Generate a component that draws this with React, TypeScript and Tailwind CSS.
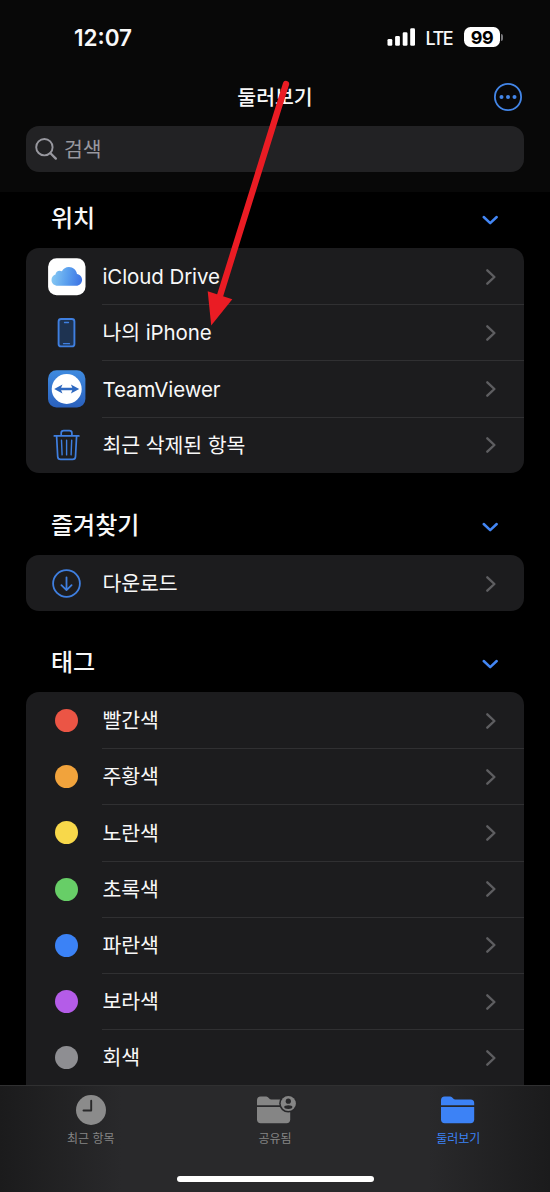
import type { ReactNode } from "react";
import { clsx } from "clsx";

const TAGS = [
  { label: "빨간색", color: "bg-[#eb5545]" },
  { label: "주황색", color: "bg-[#f1a33c]" },
  { label: "노란색", color: "bg-[#f8d84a]" },
  { label: "초록색", color: "bg-[#67ce67]" },
  { label: "파란색", color: "bg-[#3b82f6]" },
  { label: "보라색", color: "bg-[#b45ce8]" },
  { label: "회색", color: "bg-[#8e8e92]" },
];

function ICloudIcon() {
  return (
    <svg viewBox="0 0 38 38" className="size-[38px]">
      <defs>
        <linearGradient id="cloud" x1="0" y1="0.6" x2="1" y2="0.7">
          <stop offset="0" stopColor="#86c8f3" />
          <stop offset="0.5" stopColor="#5a9fee" />
          <stop offset="1" stopColor="#3d72e4" />
        </linearGradient>
      </defs>
      <rect x="0.1" y="0.3" width="37.4" height="37" rx="8.5" fill="#fff" />
      <path
        d="M9.800 27.700c-3.600 0-6.300-2.500-6.300-5.800 0-2.700 1.700-4.700 4-5.400.2-2.300 2-3.800 4.100-3.800.9 0 1.700.2 2.300.6 1.300-2.600 3.900-4.400 7-4.400 4.200 0 7.500 3 8.100 7 2.900.5 5.100 2.800 5.100 5.800 0 3.400-2.700 6-6 6z"
        fill="url(#cloud)"
      />
    </svg>
  );
}

function PhoneIcon() {
  return (
    <svg viewBox="0 0 38 38" className="size-[38px]" fill="none" stroke="#3f7fe0" strokeLinecap="round">
      <rect x="10.600" y="5" width="15.800" height="27.400" rx="2.500" fill="#1e3351" strokeWidth="1.900" />
      <path d="M16.500 8.500h4M15.500 29.700h6" strokeWidth="1.300" />
    </svg>
  );
}

function TeamViewerIcon() {
  return (
    <svg viewBox="0 0 38 38" className="size-[38px]">
      <defs>
        <linearGradient id="tv" x1="0" y1="0" x2="0" y2="1">
          <stop offset="0" stopColor="#3f8be0" />
          <stop offset="1" stopColor="#2a60bd" />
        </linearGradient>
      </defs>
      <rect x="0" y="0.2" width="37.4" height="37.4" rx="8.5" fill="url(#tv)" />
      <circle cx="18.700" cy="19" r="15" fill="#fff" />
      <path
        d="M6.200 19l8.300-4.600-1.400 3.300h11.200l-1.400-3.300L31.200 19l-8.300 4.600 1.400-3.300H13.100l1.400 3.300z"
        fill="#2d68c0"
      />
    </svg>
  );
}

function TrashIcon() {
  return (
    <svg
      viewBox="0 0 38 38"
      className="size-[38px]"
      fill="none"
      stroke="#3f7fe0"
      strokeWidth="1.700"
      strokeLinecap="round"
      strokeLinejoin="round"
    >
      <path d="M6.300 9.900h24.600M13.200 9.700V7c0-1.500 1-2.400 2.500-2.400h5.700c1.500 0 2.500.9 2.500 2.400v2.700M8.600 10.100l1.100 20.500c.1 1.700 1.200 2.700 2.900 2.700h12c1.700 0 2.800-1 2.900-2.700l1.100-20.500" />
      <path d="M13.500 14.200l.6 14.700M18.600 14.200v14.700M23.700 14.200l-.6 14.700" strokeWidth="1.400" />
    </svg>
  );
}

function DownloadIcon() {
  return (
    <svg
      viewBox="0 0 38 38"
      className="size-[38px]"
      fill="none"
      stroke="#3f7fe0"
      strokeWidth="1.800"
      strokeLinecap="round"
      strokeLinejoin="round"
    >
      <circle cx="18.500" cy="18.500" r="13.400" />
      <path d="M18.500 12.300v12.600M13.400 20.100l5.100 5 5.100-5" />
    </svg>
  );
}

function FolderIcon({ shared }: { shared?: boolean }) {
  return (
    <svg
      viewBox="0 0 42 30"
      className={clsx("h-[30px] w-[42px] overflow-visible", shared && "mr-[2px]")}
      fill="currentColor"
    >
      <path d="M4 10.300V5.300C4 3 5.300 1.600 7.600 1.600h4.900c1.200 0 1.900.3 2.700 1l1.300 1.100c.7.600 1.200.8 2.200.8h14.900c2.300 0 3.600 1.300 3.600 3.600v2.200z" />
      <path d="M4 11.900h33.200v12.600c0 2.400-1.300 3.800-3.700 3.800H7.700C5.300 28.300 4 26.900 4 24.500z" />
      {shared && (
        <>
          <circle cx="35.300" cy="8.500" r="9.100" fill="#28282a" />
          <circle cx="35.300" cy="8.500" r="7.600" />
          <circle cx="35.300" cy="6.200" r="2.600" fill="#28282a" />
          <ellipse cx="35.300" cy="12.100" rx="4.100" ry="1.900" fill="#28282a" />
        </>
      )}
    </svg>
  );
}

function StatusBar() {
  return (
    <div className="flex h-[74px] items-center justify-between pr-[47px] pl-[74px]">
      <div className="pt-px text-[22.500px] font-semibold">12:07</div>
      <div className="flex items-center">
        <svg viewBox="0 0 28 18" className="h-[18px] w-7" fill="#fff">
          <rect x="0.500" y="11" width="4.800" height="6.700" rx="1.300" />
          <rect x="8.100" y="7.900" width="4.800" height="9.800" rx="1.300" />
          <rect x="15.700" y="4.200" width="4.800" height="13.500" rx="1.300" />
          <rect x="23.200" y="0.300" width="4.800" height="17.400" rx="1.300" />
        </svg>
        <span className="ml-[10px] pt-[2px] text-[18px] font-medium tracking-[-1.500px]">LTE</span>
        <span className="ml-[12px] flex h-5 w-9 items-center justify-center rounded-[6.500px] bg-white text-[18px] font-bold tracking-[-0.5px] text-black">
          99
        </span>
        <span className="ml-px h-[7px] w-[2px] rounded-r-full bg-[#77777a]" />
      </div>
    </div>
  );
}

function SectionHeader({ title }: { title: string }) {
  return (
    <div className="flex items-center justify-between px-[51px]">
      <h2 className="pt-[2px] text-[24px] leading-[30px] font-medium">{title}</h2>
      <svg
        viewBox="0 0 18 12"
        className="mt-[3px] h-3 w-[18px]"
        fill="none"
        stroke="#4386f4"
        strokeWidth="2.500"
        strokeLinecap="round"
        strokeLinejoin="round"
      >
        <path d="M2.700 3l6.500 6.200L15.700 3" />
      </svg>
    </div>
  );
}

interface RowProps {
  icon: ReactNode;
  label: string;
  first?: boolean;
}

function Row({ icon, label, first }: RowProps) {
  return (
    <div className="flex h-[56.200px] shrink-0 items-center pl-[21.500px]">
      <div className="flex w-[38px] shrink-0 justify-center pt-px">{icon}</div>
      <div
        className={clsx(
          "ml-[16.500px] flex h-full flex-1 items-center justify-between border-t pr-[27px]",
          first ? "border-transparent" : "border-[#303032]",
        )}
      >
        <span className="pt-[2px] pl-[0.500px] text-[20.500px] tracking-[-0.1px] whitespace-nowrap">{label}</span>
        <svg
          viewBox="0 0 12 18"
          className="h-[18px] w-3"
          fill="none"
          stroke="#5e5e61"
          strokeWidth="2.400"
          strokeLinecap="round"
          strokeLinejoin="round"
        >
          <path d="M2.300 2.300L9.400 9l-7.100 6.700" />
        </svg>
      </div>
    </div>
  );
}

function Card({ children, className }: { children: ReactNode; className?: string }) {
  return <div className={clsx("mx-[26px] flex shrink-0 flex-col bg-[#1c1c1e]", className)}>{children}</div>;
}

function TabItem({ icon, label, active }: { icon: ReactNode; label: string; active?: boolean }) {
  return (
    <div className={clsx("flex flex-col items-center", active ? "text-[#3c82f6]" : "text-[#858585]")}>
      {icon}
      <span className="mt-[5px] text-[12px] leading-[18px]">{label}</span>
    </div>
  );
}

export default function App() {
  return (
    <div className="relative flex h-[1192px] w-[550px] flex-col overflow-hidden bg-black font-[Inter,'Noto_Sans_CJK_KR',sans-serif] text-[#f8f8f8]">
      <header className="h-[192px] shrink-0 bg-[#080808]">
        <StatusBar />
        <div className="grid h-[46px] grid-cols-[1fr_auto_1fr] items-center px-7">
          <span />
          <h1 className="pt-[2px] text-[20.500px] font-medium">둘러보기</h1>
          <svg viewBox="0 0 28 28" className="size-7 justify-self-end" fill="#4386e8">
            <circle cx="14" cy="14" r="13.100" fill="none" stroke="#4386e8" strokeWidth="1.800" />
            <circle cx="7.500" cy="14" r="2" />
            <circle cx="14" cy="14" r="2" />
            <circle cx="20.500" cy="14" r="2" />
          </svg>
        </div>
        <div className="mx-[26px] mt-[6px] flex h-[46px] items-center rounded-[13px] bg-[#222224] pl-[9px] text-[#98989f]">
          <svg viewBox="0 0 22 22" className="size-[22px]" fill="none" stroke="currentColor" strokeLinecap="round">
            <circle cx="9.400" cy="9.200" r="8.200" strokeWidth="1.900" />
            <path d="M15.500 15.300l5.300 5.300" strokeWidth="2.300" />
          </svg>
          <span className="ml-[7px] pt-[2px] text-[20.500px]">검색</span>
        </div>
      </header>

      <main className="flex h-[893px] shrink-0 flex-col overflow-hidden">
        <div className="mt-[10px]">
          <SectionHeader title="위치" />
        </div>
        <Card className="mt-[14px] h-[225px] rounded-[13px]">
          <Row icon={<ICloudIcon />} label="iCloud Drive" first />
          <Row icon={<PhoneIcon />} label="나의 iPhone" />
          <Row icon={<TeamViewerIcon />} label="TeamViewer" />
          <Row icon={<TrashIcon />} label="최근 삭제된 항목" />
        </Card>

        <div className="mt-[36px]">
          <SectionHeader title="즐겨찾기" />
        </div>
        <Card className="mt-[14px] h-[56px] rounded-[13px]">
          <Row icon={<DownloadIcon />} label="다운로드" first />
        </Card>

        <div className="mt-[35px]">
          <SectionHeader title="태그" />
        </div>
        <Card className="mt-[14px] h-[400px] rounded-t-[13px]">
          {TAGS.map(({ label, color }, i) => (
            <Row
              key={label}
              icon={<span className={clsx("size-[23px] rounded-full", color)} />}
              label={label}
              first={i === 0}
            />
          ))}
        </Card>
      </main>

      <footer className="flex h-[107px] shrink-0 flex-col items-center justify-between border-t border-[#303031] bg-[linear-gradient(to_right,#1b1b1c,#29292b_22%,#29292b_78%,#1b1b1c)] pt-[9px] pb-[10px]">
        <nav className="grid w-full grid-cols-[181.500px_187px_179.500px]">
          <TabItem
            label="최근 항목"
            icon={
              <svg viewBox="0 0 30 30" className="size-[30px]">
                <circle cx="15" cy="15" r="15" fill="#8b8b8b" />
                <path
                  d="M15.200 5.800v9.700H7.500"
                  fill="none"
                  stroke="#29292a"
                  strokeWidth="1.900"
                  strokeLinecap="round"
                  strokeLinejoin="round"
                />
              </svg>
            }
          />
          <TabItem label="공유됨" icon={<FolderIcon shared />} />
          <TabItem label="둘러보기" icon={<FolderIcon />} active />
        </nav>
        <div className="h-[6px] w-[197px] rounded-full bg-white" />
      </footer>

      <svg viewBox="0 0 550 1192" className="pointer-events-none absolute inset-0 size-full">
        <path d="M286 84L219 299" stroke="#ea1c24" strokeWidth="6.300" strokeLinecap="round" />
        <path d="M207.700 291.200L232.300 299.200L211.200 325.500z" fill="#ea1c24" />
      </svg>
    </div>
  );
}
